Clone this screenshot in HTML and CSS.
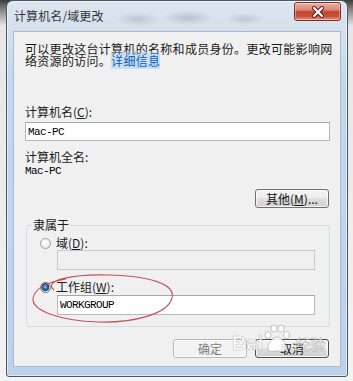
FILE: index.html
```html
<!DOCTYPE html>
<html lang="zh-CN">
<head>
<meta charset="utf-8">
<title>计算机名/域更改</title>
<link rel="stylesheet" href="styles.css">
</head>
<body>
<div class="window">
  <div class="titlebar">
    <span class="title">计算机名/域更改</span>
    <div class="close">
      <svg width="14" height="12" viewBox="0 0 14 12">
        <path d="M3 2 L11 10 M11 2 L3 10" stroke="#5a1a12" stroke-width="4" stroke-linecap="round"/>
        <path d="M3 2 L11 10 M11 2 L3 10" stroke="#ffffff" stroke-width="2.2" stroke-linecap="round"/>
      </svg>
    </div>
  </div>
  <div class="client">
    <p class="intro">可以更改这台计算机的名称和成员身份。更改可能影响网<br>络资源的访问。<span class="link">详细信息</span></p>
    <div class="lbl lbl-name">计算机名(<u>C</u>):</div>
    <div class="input input-name">Mac-PC</div>
    <div class="lbl lbl-full">计算机全名:</div>
    <div class="value">Mac-PC</div>
    <div class="row-right">
      <button class="btn">其他(<u>M</u>)...</button>
    </div>
    <fieldset class="group">
      <legend>隶属于</legend>
      <div class="radio-row first"><span class="radio"></span><span>域(<u>D</u>):</span></div>
      <div class="input disabled"></div>
      <div class="radio-row second"><span class="radio checked"></span><span>工作组(<u>W</u>):</span></div>
      <div class="input input-wg">WORKGROUP</div>
    </fieldset>
    <div class="actions">
      <button class="btn btn-disabled">确定</button>
      <button class="btn btn-focus">取消</button>
    </div>
    <svg class="annot" width="326" height="333" viewBox="0 0 326 333">
      <path d="M40 258 C 28 248, 60 242, 95 243 C 135 244, 162 252, 158 266 C 154 282, 120 291, 84 290 C 48 289, 17 279, 19 266 C 21 256, 34 250, 52 247" fill="none" stroke="#c8505f" stroke-width="1.1"/>
    </svg>
    <div class="watermark">
      <span class="wm-bai">Bai</span>
      <svg class="paw" width="28" height="30" viewBox="0 0 28 30">
        <g fill="rgba(255,255,255,0.85)" stroke="rgba(130,130,130,0.55)" stroke-width="0.8">
          <ellipse cx="5" cy="11" rx="3" ry="3.6"/>
          <ellipse cx="11" cy="4.5" rx="3" ry="3.6"/>
          <ellipse cx="18" cy="4.5" rx="3" ry="3.6"/>
          <ellipse cx="23.5" cy="11" rx="3" ry="3.6"/>
          <path d="M14 13 C 19 13, 24 21, 23 25 C 22 29, 17 27, 14 27 C 11 27, 6 29, 5 25 C 4 21, 9 13, 14 13 Z"/>
        </g>
      </svg>
      <span class="wm-jy">经验</span>
    </div>
  </div>
</div>
</body>
</html>
```
FILE: styles.css
```css
html, body {
  margin: 0;
  padding: 0;
}
body {
  width: 353px;
  height: 381px;
  overflow: hidden;
  background: linear-gradient(to bottom, #3c3c3c 0px, #7a7a7a 8px, #e6e6e6 26px, #f3f3f3 100%);
  font-family: "Noto Sans CJK SC", "Microsoft YaHei", sans-serif;
  font-size: 12px;
  color: #1a1a1a;
}
.window {
  margin-left: 6px;
  width: 342px;
  height: 377px;
  box-sizing: border-box;
  border: 1px solid #4b5663;
  border-radius: 7px 7px 3px 3px;
  background: linear-gradient(to bottom, #dde5ee 0px, #d5e0ec 30px, #c3d7ec 80px, #bcd2ea 100%);
  padding: 0 6px 9px 6px;
  display: flex;
  flex-direction: column;
  box-shadow: inset 0 0 0 1px rgba(255,255,255,0.55);
}
.titlebar {
  height: 30px;
  flex: none;
  display: flex;
  align-items: flex-start;
  justify-content: space-between;
  background:
    radial-gradient(ellipse 22px 7px at 125px 18px, rgba(90,95,105,0.22), transparent),
    radial-gradient(ellipse 26px 7px at 175px 17px, rgba(90,95,105,0.25), transparent),
    radial-gradient(ellipse 20px 6px at 232px 18px, rgba(90,95,105,0.2), transparent);
}
.title {
  margin-top: 9px;
  margin-left: 1px;
  line-height: 12px;
  color: #2f3640;
  letter-spacing: 0.1px;
}
.close {
  margin-top: 1px;
  width: 47px;
  height: 19px;
  box-sizing: border-box;
  border: 1px solid #7a2e25;
  border-radius: 3px;
  background: linear-gradient(to bottom, #eab2a4 0%, #d98775 40%, #c4442d 52%, #c9513b 78%, #e39a86 100%);
  box-shadow: inset 0 0 0 1px rgba(255,255,255,0.35);
  display: flex;
  align-items: center;
  justify-content: center;
}
.client {
  position: relative;
  flex: 1;
  box-sizing: border-box;
  border: 1px solid #a8bbd1;
  background: #f0f0f0;
  padding: 11px 10px 0 11px;
  display: flex;
  flex-direction: column;
}
.intro {
  margin: 0;
  line-height: 12px;
  white-space: nowrap;
  letter-spacing: 0.3px;
}
.link {
  color: #0a5fc4;
  background: rgba(160, 200, 240, 0.45);
}
.lbl {
  line-height: 12px;
}
.lbl-name {
  margin-top: 39px;
}
.lbl-full {
  margin-top: 10px;
}
.input {
  box-sizing: border-box;
  height: 19px;
  border: 1px solid #b5b8be;
  border-top-color: #a3a7ae;
  background: #ffffff;
  padding-left: 2px;
  display: flex;
  align-items: center;
  font-family: "Liberation Mono", "DejaVu Sans Mono", monospace;
  font-size: 11px;
  letter-spacing: -0.6px;
  color: #000;
}
.input-name {
  margin-top: 4px;
}
.value {
  margin-top: 2px;
  line-height: 12px;
  font-family: "Liberation Mono", "DejaVu Sans Mono", monospace;
  font-size: 11px;
  letter-spacing: -0.6px;
  color: #000;
}
.row-right {
  margin-top: 12px;
  display: flex;
  justify-content: flex-end;
  padding-right: 1px;
}
.btn {
  width: 74px;
  height: 19px;
  box-sizing: border-box;
  padding: 0;
  border: 1px solid #707070;
  border-radius: 3px;
  background: linear-gradient(to bottom, #f4f4f4 0%, #ececec 48%, #dedede 52%, #d0d0d0 100%);
  box-shadow: inset 0 0 0 1px rgba(255,255,255,0.75);
  font-family: "Noto Sans CJK SC", "Microsoft YaHei", sans-serif;
  font-size: 12px;
  line-height: 12px;
  color: #111;
}
.btn-disabled {
  border-color: #b6b9bc;
  background: #f3f3f3;
  color: #7d7d7d;
}
.btn-focus {
  border-color: #4e4e4e;
}
.group {
  margin: 11px 0 0 1px;
  padding: 0 14px 11px 5px;
  border: 1px solid #d3dce3;
  border-radius: 3px;
  min-width: 0;
}
.group legend {
  padding: 0 1px;
  line-height: 12px;
}
.radio-row {
  display: flex;
  align-items: center;
  gap: 5px;
  height: 12px;
  line-height: 12px;
  margin-left: 8px;
}
.radio-row.first {
  margin-top: 6px;
}
.radio-row.second {
  margin-top: 11px;
}
.radio {
  width: 11px;
  height: 11px;
  box-sizing: border-box;
  border-radius: 50%;
  border: 1px solid #9a9da2;
  background: radial-gradient(circle at 40% 35%, #ffffff 0%, #eeeeee 60%, #d8d8d8 100%);
  flex: none;
}
.radio.checked {
  border-color: #6c7784;
  background: radial-gradient(circle at 48% 45%, #9fd4f7 0%, #2e78bf 25%, #173f6a 52%, #cfd8e0 62%, #f4f6f8 78%, #d0d4d8 100%);
}
.group .input {
  margin-left: 25px;
  height: 20px;
}
.input.disabled {
  margin-top: 1px;
  background: #f0f0f0;
  border-color: #c6c8cb;
}
.input-wg {
  margin-top: 2px;
}
.actions {
  margin-top: 12px;
  display: flex;
  justify-content: flex-end;
  gap: 8px;
  padding-right: 1px;
}
.annot {
  position: absolute;
  left: 0;
  top: 0;
  pointer-events: none;
  overflow: visible;
}
.watermark {
  position: absolute;
  left: 218px;
  top: 292px;
  display: flex;
  align-items: flex-end;
  pointer-events: none;
}
.wm-bai, .wm-jy {
  font-family: "Liberation Sans", Arial, sans-serif;
  font-weight: bold;
  font-size: 20px;
  line-height: 22px;
  color: rgba(255, 255, 255, 0.8);
  -webkit-text-stroke: 0.6px rgba(120, 120, 120, 0.45);
}
.wm-jy {
  font-family: "Noto Sans CJK SC", sans-serif;
  font-weight: normal;
  font-size: 15px;
  margin-left: 4px;
  line-height: 20px;
}
.paw {
  margin-bottom: 0;
}
```
